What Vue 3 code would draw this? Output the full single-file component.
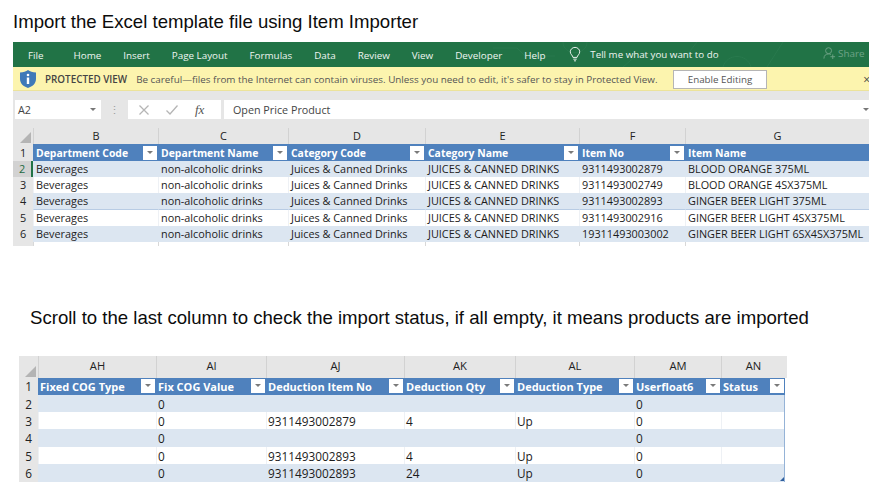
<script setup>
const tabs = ['File', 'Home', 'Insert', 'Page Layout', 'Formulas', 'Data', 'Review', 'View', 'Developer', 'Help']
const top = {
  letters: ['B', 'C', 'D', 'E', 'F', 'G'],
  heads: ['Department Code', 'Department Name', 'Category Code', 'Category Name', 'Item No', 'Item Name'],
  filters: [true, true, true, true, true, false],
  rows: [
    ['Beverages', 'non-alcoholic drinks', 'Juices & Canned Drinks', 'JUICES & CANNED DRINKS', '9311493002879', 'BLOOD ORANGE 375ML'],
    ['Beverages', 'non-alcoholic drinks', 'Juices & Canned Drinks', 'JUICES & CANNED DRINKS', '9311493002749', 'BLOOD ORANGE 4SX375ML'],
    ['Beverages', 'non-alcoholic drinks', 'Juices & Canned Drinks', 'JUICES & CANNED DRINKS', '9311493002893', 'GINGER BEER LIGHT 375ML'],
    ['Beverages', 'non-alcoholic drinks', 'Juices & Canned Drinks', 'JUICES & CANNED DRINKS', '9311493002916', 'GINGER BEER LIGHT 4SX375ML'],
    ['Beverages', 'non-alcoholic drinks', 'Juices & Canned Drinks', 'JUICES & CANNED DRINKS', '19311493003002', 'GINGER BEER LIGHT 6SX4SX375ML']
  ]
}
const bottom = {
  letters: ['AH', 'AI', 'AJ', 'AK', 'AL', 'AM', 'AN'],
  heads: ['Fixed COG Type', 'Fix COG Value', 'Deduction Item No', 'Deduction Qty', 'Deduction Type', 'Userfloat6', 'Status'],
  rows: [
    ['', '0', '', '', '', '0', ''],
    ['', '0', '9311493002879', '4', 'Up', '0', ''],
    ['', '0', '', '', '', '0', ''],
    ['', '0', '9311493002893', '4', 'Up', '0', ''],
    ['', '0', '9311493002893', '24', 'Up', '0', '']
  ]
}
</script>

<template>
  <div class="page">
    <h1 class="title">Import the Excel template file using Item Importer</h1>

    <section class="excel">
      <div class="ribbon">
        <svg class="circuit" viewBox="0 0 330 25" width="330" height="25" fill="none" stroke="#2f7f54" stroke-width="1">
          <path d="M0 6h24l8 8h30M70 0c0 14 24 14 24 0M130 25l14-12h50l10-13M230 25c4-14 24-14 28 0M290 0l-16 25" />
        </svg>
        <span v-for="t in tabs" :key="t" class="tab">{{ t }}</span>
        <svg class="bulb" viewBox="0 0 14 18" width="12" height="17" fill="none" stroke="#f2f7f4" stroke-width="1.1">
          <path d="M4.6 12.4C4.4 10 1.5 8.9 1.5 5.9a5.5 5.2 0 0 1 11 0c0 3-2.9 4.1-3.1 6.5z" />
          <path d="M5 14.4h4M5.8 16.4h2.4" />
        </svg>
        <span class="tell">Tell me what you want to do</span>
        <span class="share">
          <svg viewBox="0 0 14 14" width="13" height="14" fill="none" stroke="#6ea386" stroke-width="1">
            <circle cx="6" cy="4.5" r="3.2" /><path d="M1 13c0-3.4 2-5 5-5 1 0 1.8.2 2.5.6M10.500 8.500v5M8 11h5" />
          </svg>
          Share
        </span>
      </div>

      <div class="notice">
        <svg class="shield" viewBox="0 0 16 18" width="16" height="18">
          <path d="M8 0c2 1.6 4.5 2.4 8 2.4V9c0 4.5-3.5 7.5-8 9-4.5-1.5-8-4.5-8-9V2.4C3.5 2.4 6 1.6 8 0z" fill="#3f79b8" />
          <circle cx="8" cy="5" r="1.3" fill="#fff" />
          <path d="M6.8 7.5h2.4V14H6.8z" fill="#fff" />
        </svg>
        <strong class="pv">PROTECTED VIEW</strong>
        <span class="msg">Be careful—files from the Internet can contain viruses. Unless you need to edit, it's safer to stay in Protected View.</span>
        <button class="enable">Enable Editing</button>
        <span class="close">×</span>
      </div>

      <div class="formula">
        <div class="namebox"><span>A2</span><i class="drop"></i></div>
        <span class="dots">⋮</span>
        <div class="fxbox">
          <svg viewBox="0 0 10 10" width="10" height="10" fill="none" stroke="#b5b5b5" stroke-width="1.3"><path d="M.5.5l9 9M9.5.5l-9 9" /></svg>
          <svg viewBox="0 0 12 10" width="12" height="10" fill="none" stroke="#b5b5b5" stroke-width="1.3"><path d="M.5 5.5L4 9l7.5-8.500" /></svg>
          <span class="fx">fx</span>
        </div>
        <div class="input"><span>Open Price Product</span><i class="drop"></i></div>
      </div>

      <div class="sheet top">
        <div class="row letters">
          <div class="corner"><i></i></div>
          <div v-for="l in top.letters" :key="l" class="letter">{{ l }}</div>
        </div>
        <div class="row heads">
          <div class="num">1</div>
          <div v-for="(h, i) in top.heads" :key="h" class="head">
            <span>{{ h }}</span><b v-if="top.filters[i]" class="filter"></b>
          </div>
        </div>
        <div v-for="(r, i) in top.rows" :key="i" class="row body" :class="{ odd: i % 2 === 0 }">
          <div class="num" :class="{ active: i === 0 }">{{ i + 2 }}</div>
          <div v-for="(c, j) in r" :key="j" class="cell">{{ c }}</div>
        </div>
        <div class="row tail">
          <div class="num"></div>
          <div v-for="l in top.letters" :key="l" class="blank"></div>
        </div>
      </div>
    </section>

    <p class="title second">Scroll to the last column to check the import status, if all empty, it means products are imported</p>

    <div class="sheet bottom">
      <div class="row letters">
        <div class="corner"><i></i></div>
        <div v-for="l in bottom.letters" :key="l" class="letter">{{ l }}</div>
      </div>
      <div class="row heads">
        <div class="num">1</div>
        <div v-for="h in bottom.heads" :key="h" class="head">
          <span>{{ h }}</span><b class="filter"></b>
        </div>
      </div>
      <div v-for="(r, i) in bottom.rows" :key="i" class="row body" :class="{ odd: i % 2 === 0 }">
        <div class="num">{{ i + 2 }}</div>
        <div v-for="(c, j) in r" :key="j" class="cell">{{ c }}</div>
      </div>
      <i class="grip"></i>
    </div>
  </div>
</template>

<style>
html, body { margin: 0; background: #fff; overflow: hidden; }
</style>

<style scoped>
.page {
  width: 869px;
  height: 482px;
  overflow: hidden;
  font-family: "Open Sans", "Liberation Sans", sans-serif;
  color: #1c1c1c;
}
.title {
  margin: 0;
  padding: 11px 0 0 13px;
  height: 42px;
  box-sizing: border-box;
  font: 400 18.6px/21px "Liberation Sans", Arial, sans-serif;
  color: #0c0c0c;
  white-space: nowrap;
}
.second {
  padding: 61px 0 0 30px;
  height: 110px;
}

.excel { margin-left: 13px; width: 856px; overflow: hidden; }

.ribbon {
  position: relative;
  height: 25px;
  background: #217346;
  display: flex;
  align-items: center;
  padding-left: 15px;
  color: #eef5f1;
  font-size: 9.85px;
  white-space: nowrap;
}
.circuit { position: absolute; left: 480px; top: 0; opacity: .55; }
.tab { margin-right: 21.9px; position: relative; }
.tab:first-of-type { margin-right: 30px; }
.bulb { position: relative; margin-left: 2px; }
.tell { margin-left: 9px; position: relative; font-size: 9.75px; }
.share {
  position: absolute; right: 0; top: 4px;
  display: flex; align-items: center; gap: 2px;
  color: #6ea386;
  width: 46px;
}

.notice {
  height: 24px;
  box-sizing: border-box;
  background: #fcf4ae;
  border-bottom: 1px solid #ece39b;
  display: flex;
  align-items: center;
  padding-left: 7px;
  font-size: 9.85px;
  color: #555;
  white-space: nowrap;
  position: relative;
}
.pv { margin-left: 9px; font-weight: 600; color: #444; }
.msg { margin-left: 9px; }
.enable {
  position: absolute; left: 660px; top: 3px;
  width: 94px; height: 19px;
  box-sizing: border-box;
  background: #fff;
  border: 1px solid #b5b5b5;
  font: inherit;
  font-size: 9.8px;
  color: #555;
  padding: 0;
}
.close { position: absolute; right: -1px; top: 4px; font-size: 12px; color: #444; }

.formula {
  height: 37px;
  box-sizing: border-box;
  background: #e6e6e6;
  display: flex;
  align-items: flex-start;
  padding: 9px 0 0 2px;
  font-size: 10.75px;
  color: #444;
}
.namebox {
  width: 86px; height: 19px;
  background: #fff;
  display: flex; align-items: center; justify-content: space-between;
  padding: 0 5px 0 3px;
  box-sizing: border-box;
}
.drop {
  width: 0; height: 0;
  border-left: 3px solid transparent;
  border-right: 3px solid transparent;
  border-top: 3px solid #777;
  display: block;
}
.dots { width: 27px; text-align: center; color: #9c9c9c; line-height: 19px; font-size: 11px; }
.fxbox {
  width: 93px; height: 19px;
  background: #fff;
  display: flex; align-items: center;
  gap: 17px;
  padding-left: 11px;
  box-sizing: border-box;
}
.fx { font: italic 13px "Liberation Serif", serif; color: #555; }
.input {
  flex: 1;
  margin-left: 3px;
  height: 19px;
  background: #fff;
  display: flex; align-items: center; justify-content: space-between;
  padding: 0 0 0 9px;
}

.row { display: grid; white-space: nowrap; }
.top { font-size: 10.85px; }
.bottom { font-size: 11.8px; }
.top .row { grid-template-columns: 20px 125px 130px 137px 154px 106px 184px; }
.bottom .row { grid-template-columns: 19px 118px 110px 138px 111px 119px 87px 64px; }
.bottom { margin-left: 19px; width: 768px; position: relative; }

.letters { background: #e6e6e6; color: #222; }
.top .letters { height: 16px; }
.bottom .letters { height: 22px; }
.corner { position: relative; }
.corner i {
  position: absolute; right: 2px; bottom: 1px;
  width: 0; height: 0;
  border-left: 11px solid transparent;
  border-bottom: 11px solid #b4b4b4;
}
.letter {
  text-align: center;
  border-left: 1px solid #d2d2d2;
  box-sizing: border-box;
  font-size: 10.9px;
}
.top .letter { line-height: 16px; }
.bottom .letter { line-height: 20px; font-size: 11.2px; }

.num {
  background: #e6e6e6;
  color: #222;
  text-align: center;
  font-size: 10.9px;
  box-sizing: border-box;
}
.bottom .num { font-size: 11.8px; }
.num.active { background: #d2d2d2; color: #1e6b41; border-right: 2px solid #217346; }

.head {
  background: #4f81bd;
  color: #fff;
  font-weight: 700;
  display: flex;
  align-items: center;
  justify-content: space-between;
  padding: 0 1px 0 3px;
  box-sizing: border-box;
  overflow: hidden;
  font-size: 10.4px;
}
.head span { position: relative; top: 1px; }
.bottom .head { font-size: 11px; padding-left: 2px; }
.bottom .head span { top: 0; }
.filter {
  width: 14px; height: 14px;
  background: #fff;
  position: relative;
  flex: none;
}
.filter::after {
  content: "";
  position: absolute; left: 4px; top: 5px;
  border-left: 3px solid transparent;
  border-right: 3px solid transparent;
  border-top: 3px solid #7a7a7a;
}

.heads { height: 17px; line-height: 17px; }
.top .body { height: 16.2px; line-height: 16px; }
.bottom .body { height: 17.2px; line-height: 18px; }
.cell {
  background: #fff;
  border-left: 1px solid #eef1f5;
  border-bottom: 1px solid #b8cce4;
  padding-left: 2px;
  box-sizing: border-box;
}
.bottom .cell { padding-left: 1px; }
.odd .cell { background: #dce6f1; border-left-color: #dce6f1; }
.tail { height: 4px; }
.blank { background: #fff; border-left: 1px solid #d8d8d8; }
.bottom .cell:last-child { border-right: 1px solid #95b3d7; }
.grip {
  position: absolute; right: 3px; bottom: 0;
  width: 0; height: 0;
  border-left: 4px solid transparent;
  border-bottom: 4px solid #2f5f9e;
}
</style>
